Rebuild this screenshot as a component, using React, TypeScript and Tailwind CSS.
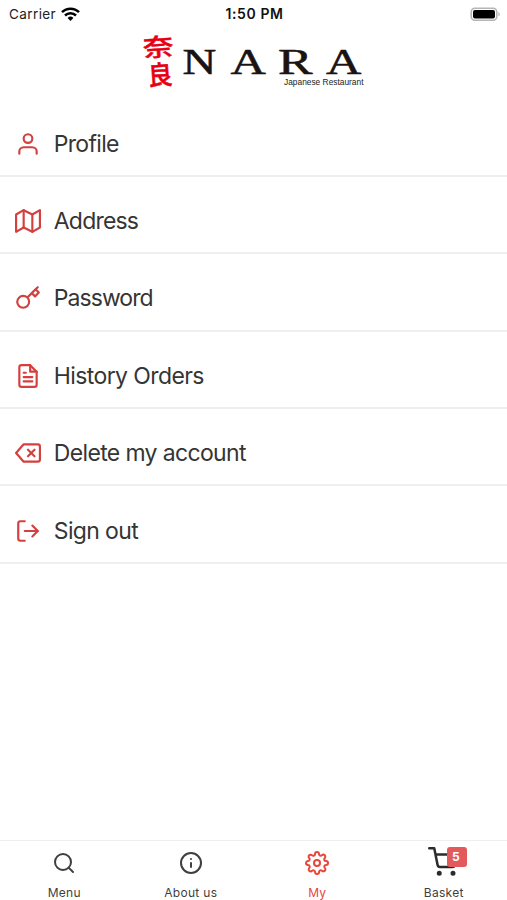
import React, { useState } from 'react';
import {
  FiUser,
  FiMap,
  FiKey,
  FiFileText,
  FiDelete,
  FiLogOut,
  FiSearch,
  FiInfo,
  FiSettings,
  FiShoppingCart,
} from 'react-icons/fi';

const menuItems = [
  { label: 'Profile', icon: FiUser, text: 'tracking-[-0.7px]' },
  { label: 'Address', icon: FiMap, text: 'tracking-[-0.8px]' },
  { label: 'Password', icon: FiKey, text: 'tracking-[-0.95px]' },
  { label: 'History Orders', icon: FiFileText, text: 'tracking-[-0.6px]' },
  { label: 'Delete my account', icon: FiDelete, text: 'tracking-[-0.65px]' },
  { label: 'Sign out', icon: FiLogOut, text: 'tracking-[-0.65px]' },
];

const tabs = [
  { label: 'Menu', icon: FiSearch },
  { label: 'About us', icon: FiInfo },
  { label: 'My', icon: FiSettings },
  { label: 'Basket', icon: FiShoppingCart, badge: 5 },
];

function StatusBar() {
  return (
    <div className="grid h-7 grid-cols-3 items-center pl-[9px] pr-[7px] text-[13.5px] leading-none text-[#222]">
      <div className="flex items-center gap-[5px]">
        <span className="pt-px tracking-[0.4px]">Carrier</span>
        <svg width="19" height="15" viewBox="0 0 19 15" fill="none" stroke="#000" strokeWidth="2.5">
          <path d="M1 5.2a12 12 0 0 1 17 0" />
          <path d="M4 8.5a7.8 7.8 0 0 1 11 0" />
          <path d="M9.5 14 6.6 11a4.1 4.1 0 0 1 5.8 0z" fill="#000" stroke="none" />
        </svg>
      </div>
      <span className="text-center text-sm font-semibold tracking-[0.6px] text-[#111]">1:50 PM</span>
      <svg className="justify-self-end" width="31" height="15" viewBox="0 0 31 15">
        <rect x="2.2" y="1.2" width="25.6" height="12" rx="3.8" fill="none" stroke="#b5b5b5" strokeWidth="1.6" />
        <rect x="4" y="3" width="22" height="8.6" rx="2" fill="#000" />
        <path d="M29.4 5.2c1.8.6 1.8 3.4 0 4z" fill="#b5b5b5" />
      </svg>
    </div>
  );
}

function Logo() {
  return (
    <svg className="mx-auto overflow-visible" width="224" height="60" viewBox="0 0 224 60">
      <g fill="#e60012" stroke="#e60012" strokeWidth="0.5" strokeLinejoin="round" fontFamily="'Noto Sans CJK JP', sans-serif" fontWeight="500">
        <text transform="translate(1.5 25) rotate(-4) scale(1.18 .93)" fontSize="26">奈</text>
        <text transform="translate(6.5 53.5) rotate(-4) scale(.98 1.06)" fontSize="25">良</text>
      </g>
      <g fill="#1a1311" stroke="#1a1311" strokeWidth="0.5" fontFamily="'Liberation Serif', serif" fontSize="36">
        <text transform="translate(40.5 42) scale(1.3 1)">N</text>
        <text transform="translate(88.5 42) scale(1.36 1)">A</text>
        <text transform="translate(136 42) scale(1.44 1)">R</text>
        <text transform="translate(184 42) scale(1.36 1)">A</text>
      </g>
      <text x="142" y="52.5" fontFamily="'Liberation Sans', sans-serif" fontSize="8.6" textLength="79.5" lengthAdjust="spacingAndGlyphs" fill="#222">
        Japanese Restaurant
      </text>
    </svg>
  );
}

export default function App() {
  const [activeTab, setActiveTab] = useState('My');

  return (
    <div className="flex h-[900px] w-full flex-col bg-white font-['Inter',sans-serif] text-[#353535]">
      <StatusBar />
      <header className="h-[71.4px] pt-1">
        <Logo />
      </header>

      <main className="flex-1">
        {menuItems.map(({ label, icon: Icon, text }) => (
          <button
            key={label}
            className="flex h-[77.4px] w-full items-center gap-[12.5px] border-b-2 border-[#eeeff0] pl-[15.3px] pt-[13px] text-left"
          >
            <Icon className="size-[26px] shrink-0 text-[#d3403f]" />
            <span className={`text-[23px] leading-7 ${text}`}>{label}</span>
          </button>
        ))}
      </main>

      <nav className="grid h-[60px] grid-cols-4 border-t border-[#efefef] pl-px">
        {tabs.map(({ label, icon: Icon, badge }) => (
          <button
            key={label}
            onClick={() => setActiveTab(label)}
            className={`flex flex-col items-center ${activeTab === label ? 'text-[#e8463a]' : 'text-[#3f3f3f]'}`}
          >
            <span className="relative flex h-[44px] items-center">
              {badge ? (
                <>
                  <Icon className="mr-0.5 mt-[-2px] size-[30px] text-[#2b2b2b] [&_circle]:fill-current" />
                  <span className="absolute -right-[7px] top-[6px] flex h-5 w-5 items-center justify-center rounded-[3px] bg-[#e25a5c] pr-0.5 text-xs font-bold text-white">
                    {badge}
                  </span>
                </>
              ) : (
                <Icon className="size-6" />
              )}
            </span>
            <span className="text-xs leading-[15px] tracking-[0.3px]">{label}</span>
          </button>
        ))}
      </nav>
    </div>
  );
}
